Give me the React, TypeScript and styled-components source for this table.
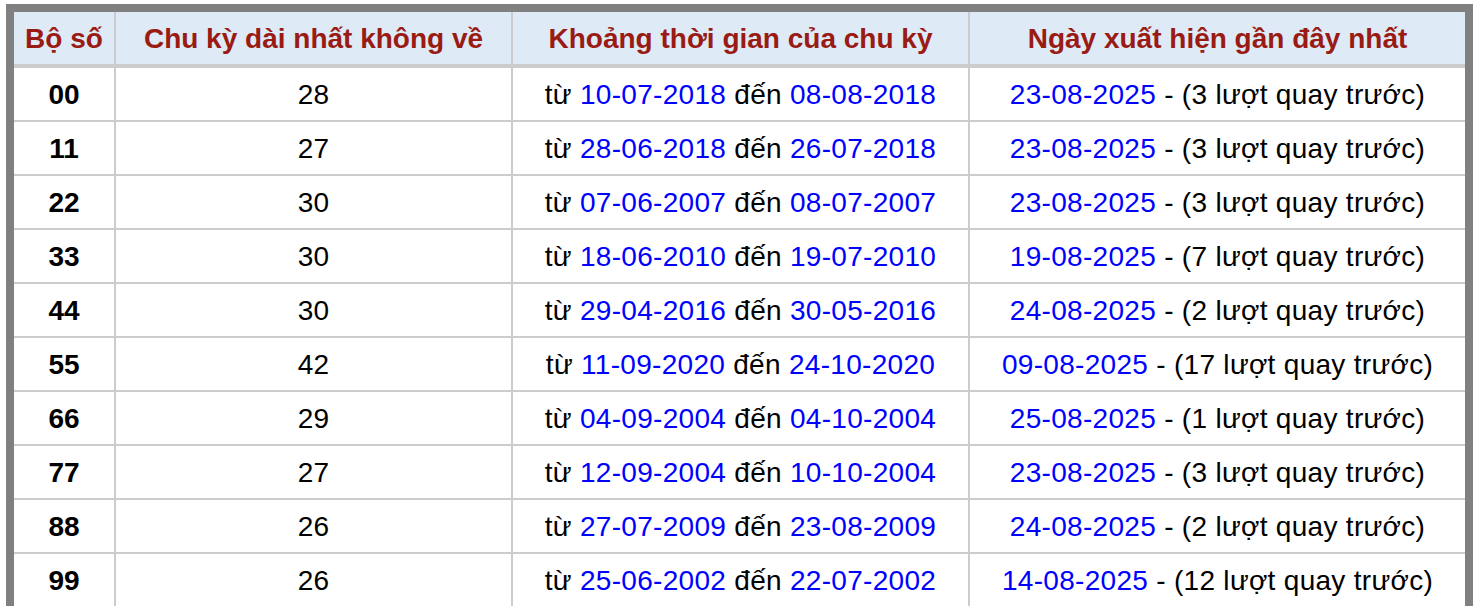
import React from "react";
import styled, { createGlobalStyle } from "styled-components";

const Global = createGlobalStyle`
  html, body { margin: 0; padding: 0; background: #fff; }
  body { font-family: "Liberation Sans", Arial, Helvetica, sans-serif; }
  * { box-sizing: border-box; }
`;

const Page = styled.div`
  padding: 4px 0 0 6px;
`;

const Grid = styled.div`
  display: grid;
  grid-template-columns: 100px 395px 455px 495px;
  column-gap: 2px;
  row-gap: 2px;
  width: max-content;
  background: #cccccc;
  border: 8px solid #808080;
  border-bottom: none;
`;

const HeadCell = styled.div`
  height: 54px;
  padding-top: 1px;
  display: flex;
  align-items: center;
  justify-content: center;
  background: #deeaf6;
  color: #991b14;
  font-weight: bold;
  font-size: 28px;
  white-space: nowrap;
  border-bottom: 2px solid #cccccc;
`;

const Cell = styled.div<{ $bold?: boolean }>`
  height: 52px;
  padding-top: 2px;
  display: flex;
  align-items: center;
  justify-content: center;
  background: #ffffff;
  color: #000000;
  font-size: 28px;
  letter-spacing: ${(p) => (p.$bold ? "0" : "0.3px")};
  font-weight: ${(p) => (p.$bold ? "bold" : "normal")};
  white-space: pre;
`;

const DateText = styled.span`
  color: #0000ff;
`;

type Row = {
  so: string;
  len: number;
  from: string;
  to: string;
  last: string;
  ago: number;
};

const rows: Row[] = [
  { so: "00", len: 28, from: "10-07-2018", to: "08-08-2018", last: "23-08-2025", ago: 3 },
  { so: "11", len: 27, from: "28-06-2018", to: "26-07-2018", last: "23-08-2025", ago: 3 },
  { so: "22", len: 30, from: "07-06-2007", to: "08-07-2007", last: "23-08-2025", ago: 3 },
  { so: "33", len: 30, from: "18-06-2010", to: "19-07-2010", last: "19-08-2025", ago: 7 },
  { so: "44", len: 30, from: "29-04-2016", to: "30-05-2016", last: "24-08-2025", ago: 2 },
  { so: "55", len: 42, from: "11-09-2020", to: "24-10-2020", last: "09-08-2025", ago: 17 },
  { so: "66", len: 29, from: "04-09-2004", to: "04-10-2004", last: "25-08-2025", ago: 1 },
  { so: "77", len: 27, from: "12-09-2004", to: "10-10-2004", last: "23-08-2025", ago: 3 },
  { so: "88", len: 26, from: "27-07-2009", to: "23-08-2009", last: "24-08-2025", ago: 2 },
  { so: "99", len: 26, from: "25-06-2002", to: "22-07-2002", last: "14-08-2025", ago: 12 },
];

export default function App() {
  return (
    <Page>
      <Global />
      <Grid>
        <HeadCell>Bộ số</HeadCell>
        <HeadCell>Chu kỳ dài nhất không về</HeadCell>
        <HeadCell>Khoảng thời gian của chu kỳ</HeadCell>
        <HeadCell>Ngày xuất hiện gần đây nhất</HeadCell>
        {rows.map((r) => (
          <React.Fragment key={r.so}>
            <Cell $bold>{r.so}</Cell>
            <Cell>{r.len}</Cell>
            <Cell>
              {"từ "}
              <DateText>{r.from}</DateText>
              {" đến "}
              <DateText>{r.to}</DateText>
            </Cell>
            <Cell>
              <DateText>{r.last}</DateText>
              {` - (${r.ago} lượt quay trước)`}
            </Cell>
          </React.Fragment>
        ))}
      </Grid>
    </Page>
  );
}
